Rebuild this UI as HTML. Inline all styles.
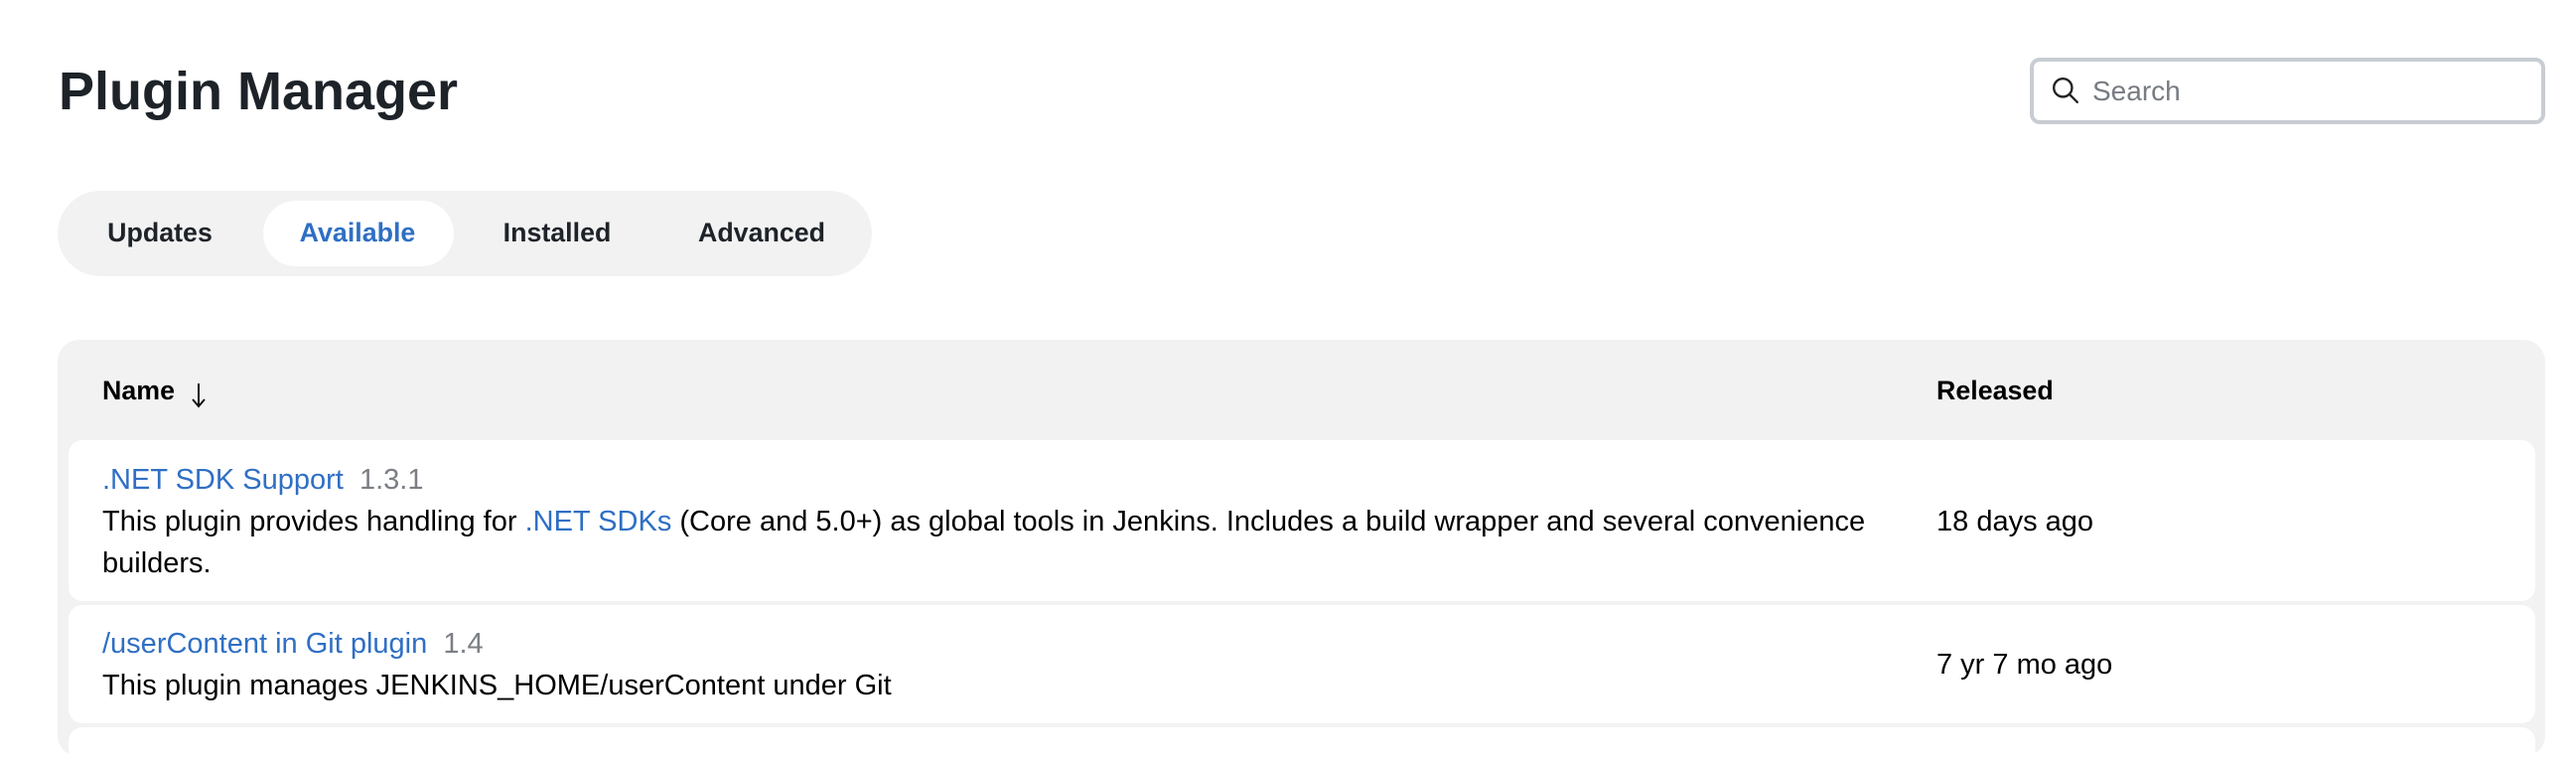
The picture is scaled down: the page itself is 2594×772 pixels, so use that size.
<!DOCTYPE html>
<html><head><meta charset="utf-8"><style>
*{box-sizing:border-box;margin:0;padding:0}
body{width:2594px;height:742px;overflow:hidden;background:#fff;font-family:"Liberation Sans",Arial,sans-serif;color:#14141f;position:relative}
.abs{position:absolute;white-space:nowrap}
h1{position:absolute;left:59px;top:60px;font-size:54px;font-weight:bold;color:#1e2329;line-height:64px}
.search{position:absolute;left:2044px;top:58px;width:519px;height:67px;border:4px solid #c8cdd3;border-radius:10px;background:#fff}
.search span{position:absolute;left:59px;top:14px;font-size:28px;color:#777c82}
.search svg{display:block;position:absolute;left:17px;top:14px}
.pill{position:absolute;left:58px;top:192px;width:820px;height:86px;border-radius:43px;background:#f2f2f2}
.act{position:absolute;left:265px;top:202px;width:192px;height:66px;border-radius:33px;background:#fff}
.tab{position:absolute;top:219px;font-size:26.8px;font-weight:bold;color:#1e2329;transform:translateX(-50%);white-space:nowrap}
.table{position:absolute;left:58px;top:342px;width:2505px;height:420px;border-radius:22px;background:#f2f2f2}
.row{position:absolute;left:69px;width:2484px;background:#fff;border-radius:14px}
.t{font-size:29px;line-height:42px}
.h{font-size:26.8px;line-height:42px;font-weight:bold;color:#000}
a{color:#2f6fc4;text-decoration:none}
.v{color:#7b7f85}
</style></head><body>
<h1>Plugin Manager</h1>
<div class="search">
<svg width="30" height="30" viewBox="0 0 28 28"><circle cx="11.5" cy="11.5" r="8.5" fill="none" stroke="#222" stroke-width="2.2"/><line x1="17.8" y1="17.8" x2="25" y2="25" stroke="#222" stroke-width="2.2" stroke-linecap="round"/></svg>
<span>Search</span></div>
<div class="pill"></div><div class="act"></div>
<div class="tab" style="left:161px">Updates</div>
<div class="tab" style="left:360px;color:#2f6fc4">Available</div>
<div class="tab" style="left:561px">Installed</div>
<div class="tab" style="left:767px">Advanced</div>
<div class="table"></div>
<div class="abs h" style="left:103px;top:372px">Name</div>
<svg class="abs" style="left:192px;top:384px" width="16" height="28" viewBox="0 0 16 28"><line x1="8" y1="2" x2="8" y2="25" stroke="#111" stroke-width="2"/><path d="M2 18 L8 25 L14 18" fill="none" stroke="#111" stroke-width="2"/></svg>
<div class="abs h" style="left:1950px;top:372px">Released</div>
<div class="row" style="top:443px;height:162px"></div>
<div class="row" style="top:609px;height:119px"></div>
<div class="row" style="top:732px;height:40px"></div>
<div class="abs t" style="left:103px;top:462px"><a>.NET SDK Support</a>&nbsp; <span class="v">1.3.1</span></div>
<div class="abs t" style="left:103px;top:504px;color:#000">This plugin provides handling for <a>.NET SDKs</a> (Core and 5.0+) as global tools in Jenkins. Includes a build wrapper and several convenience</div>
<div class="abs t" style="left:103px;top:546px;color:#000">builders.</div>
<div class="abs t" style="left:1950px;top:504px;color:#000">18 days ago</div>
<div class="abs t" style="left:103px;top:627px"><a>/userContent in Git plugin</a>&nbsp; <span class="v">1.4</span></div>
<div class="abs t" style="left:103px;top:669px;color:#000">This plugin manages JENKINS_HOME/userContent under Git</div>
<div class="abs t" style="left:1950px;top:648px;color:#000">7 yr 7 mo ago</div>
</body></html>
